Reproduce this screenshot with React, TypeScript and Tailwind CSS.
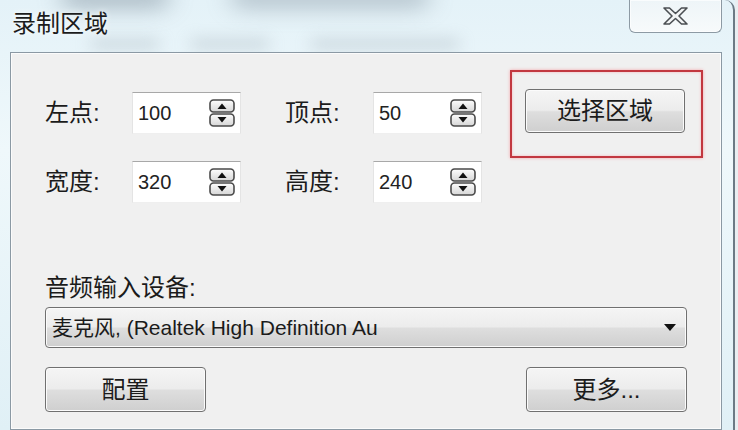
import React from "react";

const FONT = "font-['Liberation_Sans','Noto_Sans_CJK_SC',sans-serif]";

const BTN =
  "flex items-center justify-center rounded-[4px] border border-[#707070] bg-[linear-gradient(to_bottom,#f5f5f5_0%,#ececec_48%,#dedede_52%,#cfcfcf_100%)] shadow-[inset_0_0_0_1px_#fbfbfb] text-[24px] leading-none text-[#1b1b1b]";

function Spinner() {
  return (
    <svg width="26" height="28" viewBox="0 0 26 28">
      <defs>
        <linearGradient id="spin" x1="0" y1="0" x2="0" y2="1">
          <stop offset="0" stopColor="#fdfdfd" />
          <stop offset="1" stopColor="#d6d6d6" />
        </linearGradient>
      </defs>
      <rect x="1" y="1" width="24" height="12" rx="3.5" fill="url(#spin)" stroke="#4a4a4a" strokeWidth="1.6" />
      <rect x="1" y="15" width="24" height="12" rx="3.5" fill="url(#spin)" stroke="#4a4a4a" strokeWidth="1.6" />
      <path d="M8.5 10 L13 4.5 L17.5 10 Z" fill="#111" />
      <path d="M8.5 18 L13 23.5 L17.5 18 Z" fill="#111" />
    </svg>
  );
}

function NumberField({ value }: { value: string }) {
  return (
    <div className="flex h-[42px] w-[109px] items-center justify-between border-t border-t-[#a8a8a8] border-x border-x-[#e4e4e4] border-b border-b-[#efefef] bg-white pl-[5px] pr-[5px]">
      <span className="text-[20px] leading-none text-[#222]">{value}</span>
      <Spinner />
    </div>
  );
}

function FieldRow({ items }: { items: [string, string, string, string] }) {
  const [l1, v1, l2, v2] = items;
  return (
    <div className="flex h-[42px] items-center">
      <span className="w-[87px] text-[24px] leading-none text-[#1b1b1b]">{l1}</span>
      <NumberField value={v1} />
      <span className="ml-[44px] w-[88px] text-[24px] leading-none text-[#1b1b1b]">{l2}</span>
      <NumberField value={v2} />
    </div>
  );
}

function CloseGlyph() {
  return (
    <svg width="25" height="18" viewBox="0 0 25 18">
      <path
        d="M1 1 H6.5 L12.5 6.5 L18.5 1 H24 L16 9 L24 17 H18.5 L12.5 11.5 L6.5 17 H1 L9 9 Z"
        fill="#f2f4f5"
        stroke="#4b4f53"
        strokeWidth="1.6"
        strokeLinejoin="round"
      />
    </svg>
  );
}

export default function App() {
  return (
    <div
      className={`${FONT} relative flex h-[430px] w-[738px] overflow-hidden bg-[linear-gradient(180deg,#e4f2f8_0%,#eff8fb_35%,#e0f0f6_100%)]`}
    >
      {/* blurred glass backdrop */}
      <div className="pointer-events-none absolute left-[60px] top-[-14px] h-[20px] w-[110px] rounded-full bg-[#6e7e8c] opacity-60 blur-md" />
      <div className="pointer-events-none absolute left-[230px] top-[-14px] h-[20px] w-[200px] rounded-full bg-[#6e7e8c] opacity-50 blur-md" />
      <div className="pointer-events-none absolute left-[90px] top-[40px] h-[8px] w-[70px] rounded-full bg-[#9aa7b0] opacity-50 blur-sm" />
      <div className="pointer-events-none absolute left-[190px] top-[40px] h-[8px] w-[80px] rounded-full bg-[#9aa7b0] opacity-50 blur-sm" />
      <div className="pointer-events-none absolute left-[310px] top-[40px] h-[8px] w-[150px] rounded-full bg-[#9aa7b0] opacity-50 blur-sm" />

      <div className="relative flex w-[735px] flex-col rounded-tr-[10px] border-r-2 border-r-[#6c7a85]">
        {/* title bar */}
        <div className="flex h-[52px] items-start justify-between pl-[12px] pr-[11px]">
          <span className="pt-[9px] text-[24px] leading-[30px] text-[#1c1c1c] [text-shadow:0_0_6px_#ffffff]">
            录制区域
          </span>
          <div className="flex h-[33px] w-[93px] items-center justify-center rounded-b-[6px] border-x border-b border-[#8d9aa4] bg-[linear-gradient(to_bottom,#eef5f8,#f7fafb)] shadow-[inset_0_0_0_1px_#ffffffaa]">
            <CloseGlyph />
          </div>
        </div>

        {/* client panel */}
        <div className="ml-[10px] flex w-[712px] flex-1 flex-col border border-[#8b99a4] bg-[#f0f0f0] pl-[34px] pt-[17px] shadow-[inset_0_0_0_1px_#fbfbfb]">
          <div className="flex items-start">
            <div className="mt-[22px] flex flex-col gap-[27px]">
              <FieldRow items={["左点:", "100", "顶点:", "50"]} />
              <FieldRow items={["宽度:", "320", "高度:", "240"]} />
            </div>
            <div className="ml-[28px] h-[88px] w-[193px] border-2 border-[#c23840] pl-[13px] pt-[17px] shadow-[0_0_3px_#f4a4a8,inset_0_0_3px_#f6b6ba]">
              <button className={`${BTN} h-[44px] w-[160px]`}>选择区域</button>
            </div>
          </div>

          <div className="mt-[68px] h-[34px] text-[24px] leading-[34px] text-[#1b1b1b]">音频输入设备:</div>

          <div className={`${BTN} mt-[2px] h-[41px] w-[642px] !justify-between pl-[6px] pr-[10px] !text-[21px]`}>
            <span>麦克风, (Realtek High Definition Au</span>
            <svg width="12" height="8" viewBox="0 0 12 8">
              <path d="M0 0 H12 L6 7 Z" fill="#111" />
            </svg>
          </div>

          <div className="mt-[19px] flex w-[642px] justify-between">
            <button className={`${BTN} h-[45px] w-[161px]`}>配置</button>
            <button className={`${BTN} h-[45px] w-[161px]`}>更多...</button>
          </div>
        </div>
      </div>
      <div className="flex-1 bg-[#e9eef1]" />
    </div>
  );
}
